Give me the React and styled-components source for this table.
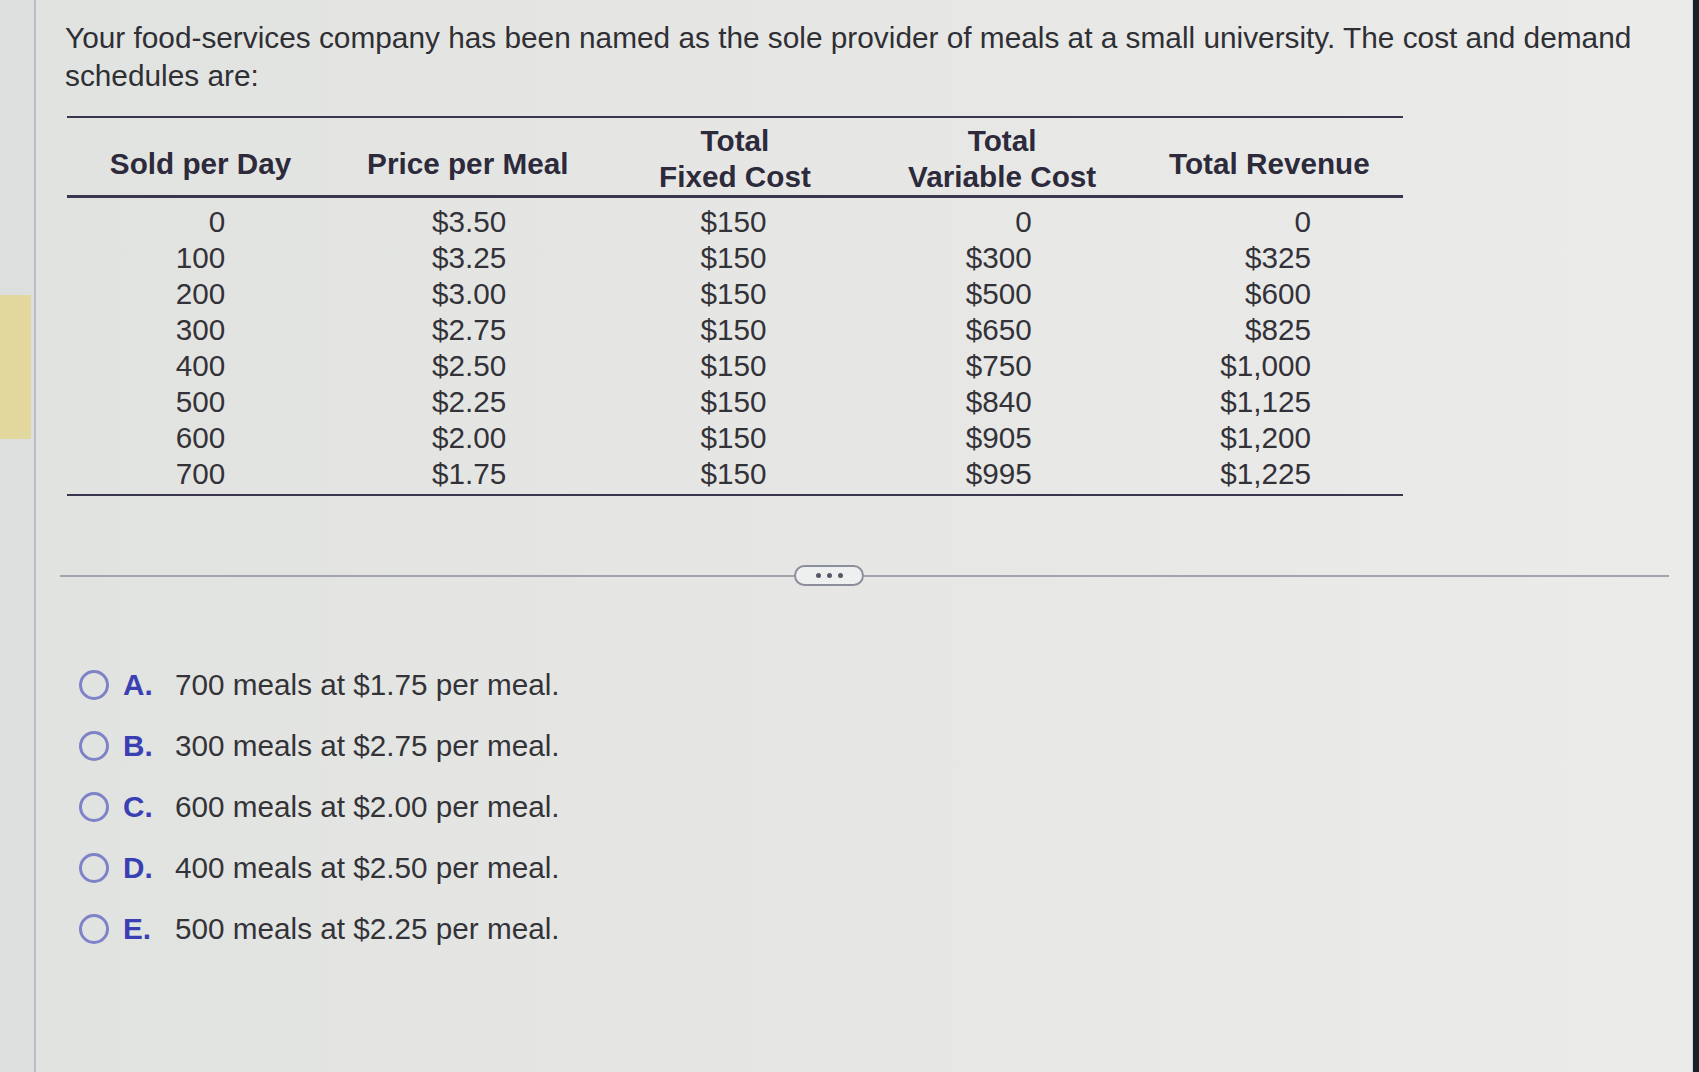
import React from "react";
import styled, { createGlobalStyle } from "styled-components";

const GlobalStyle = createGlobalStyle`
  html, body {
    margin: 0;
    padding: 0;
    background: #e4e6e4;
  }
  body {
    font-family: "Liberation Sans", Arial, sans-serif;
  }
`;

const Screen = styled.div`
  display: flex;
  width: 100vw;
  height: 100vh;
  overflow: hidden;
`;

const LeftRail = styled.div`
  width: 34px;
  flex: none;
  background: #dcdfde;
  border-right: 2px solid #b9bdc8;
  display: flex;
  flex-direction: column;
`;

const RailMarker = styled.div`
  margin-top: 295px;
  width: 31px;
  height: 144px;
  background: #e2d79c;
`;

const RightEdge = styled.div`
  width: 6px;
  flex: none;
  background: #1c2026;
  border-left: 1px solid #c3d6e6;
`;

const Content = styled.main`
  flex: 1;
  padding: 19px 0 0 29px;
  background: linear-gradient(90deg, #e1e3e1 0%, #e6e7e5 45%, #ebecea 100%);
  color: #2f2f34;
`;

const Question = styled.p`
  margin: 0;
  max-width: 1620px;
  font-size: 29.8px;
  line-height: 38px;
`;

const Schedule = styled.table`
  margin: 21px 0 0 2px;
  width: 1336px;
  border-collapse: collapse;
  table-layout: fixed;
  color: #2d2a3b;
`;

const HeadRow = styled.tr`
  border-top: 2px solid #3b3650;
  border-bottom: 3px solid #3b3650;
`;

const HeadCell = styled.th`
  font-size: 29.7px;
  font-weight: 700;
  line-height: 36px;
  text-align: center;
  vertical-align: middle;
  padding: ${(p) => (p.$single ? "14px" : "5px")} 0 0;
`;

const Body = styled.tbody`
  border-bottom: 2px solid #3b3650;

  tr:first-child td {
    padding-top: 6px;
  }
  tr:last-child td {
    padding-bottom: 2px;
  }
`;

const Cell = styled.td`
  font-size: 29.7px;
  line-height: 36px;
  text-align: right;
  padding: 0 ${(p) => p.$pr}px 0 0;
  color: #333238;
`;

const Divider = styled.div`
  margin: 69px 0 0 -5px;
  display: grid;
  grid-template-columns: 734px 70px 805px;
  align-items: center;
`;

const Rule = styled.div`
  height: 2px;
  background: #a2a3ad;
`;

const MoreButton = styled.button`
  height: 21px;
  padding: 0;
  border: 2px solid #8c8e9b;
  border-radius: 12px;
  background: #eef0ef;
  display: flex;
  align-items: center;
  justify-content: center;
  gap: 6px;
  cursor: pointer;
`;

const Dot = styled.span`
  width: 5px;
  height: 5px;
  border-radius: 50%;
  background: #575a66;
`;

const Options = styled.ul`
  list-style: none;
  margin: 79px 0 0 14px;
  padding: 0;
  display: flex;
  flex-direction: column;
  gap: 21px;
`;

const Option = styled.li`
  display: flex;
  align-items: center;
  height: 40px;
  font-size: 29.7px;
  color: #333338;
`;

const Radio = styled.span`
  width: 24px;
  height: 24px;
  border-radius: 50%;
  border: 3px solid #7e82c7;
  flex: none;
  margin-right: 14px;
`;

const Letter = styled.span`
  width: 52px;
  font-weight: 700;
  color: #3a40b3;
`;

const headers = [
  ["Sold per Day"],
  ["Price per Meal"],
  ["Total", "Fixed Cost"],
  ["Total", "Variable Cost"],
  ["Total Revenue"],
];

const rows = [
  ["0", "$3.50", "$150", "0", "0"],
  ["100", "$3.25", "$150", "$300", "$325"],
  ["200", "$3.00", "$150", "$500", "$600"],
  ["300", "$2.75", "$150", "$650", "$825"],
  ["400", "$2.50", "$150", "$750", "$1,000"],
  ["500", "$2.25", "$150", "$840", "$1,125"],
  ["600", "$2.00", "$150", "$905", "$1,200"],
  ["700", "$1.75", "$150", "$995", "$1,225"],
];

const padRight = [109, 95, 102, 104, 92];

const choices = [
  ["A.", "700 meals at $1.75 per meal."],
  ["B.", "300 meals at $2.75 per meal."],
  ["C.", "600 meals at $2.00 per meal."],
  ["D.", "400 meals at $2.50 per meal."],
  ["E.", "500 meals at $2.25 per meal."],
];

function App() {
  return (
    <>
      <GlobalStyle />
      <Screen>
        <LeftRail>
          <RailMarker />
        </LeftRail>
        <Content>
          <Question>
            Your food-services company has been named as the sole provider of
            meals at a small university. The cost and demand schedules are:
          </Question>
          <Schedule>
            <thead>
              <HeadRow>
                {headers.map((h, i) => (
                  <HeadCell key={i} $single={h.length === 1}>
                    {h.map((line, j) => (
                      <div key={j}>{line}</div>
                    ))}
                  </HeadCell>
                ))}
              </HeadRow>
            </thead>
            <Body>
              {rows.map((r, i) => (
                <tr key={i}>
                  {r.map((v, j) => (
                    <Cell key={j} $pr={padRight[j]}>
                      {v}
                    </Cell>
                  ))}
                </tr>
              ))}
            </Body>
          </Schedule>
          <Divider>
            <Rule />
            <MoreButton aria-label="more">
              <Dot />
              <Dot />
              <Dot />
            </MoreButton>
            <Rule />
          </Divider>
          <Options>
            {choices.map(([l, t]) => (
              <Option key={l}>
                <Radio />
                <Letter>{l}</Letter>
                {t}
              </Option>
            ))}
          </Options>
        </Content>
        <RightEdge />
      </Screen>
    </>
  );
}

export default App;
